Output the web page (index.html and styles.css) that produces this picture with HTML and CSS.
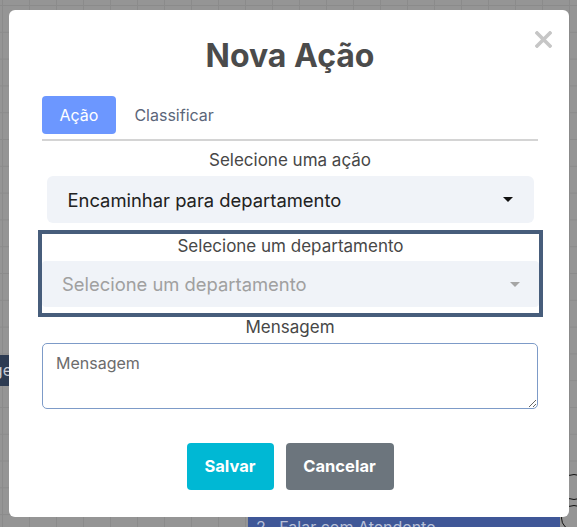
FILE: index.html
```html
<!DOCTYPE html>
<html lang="pt-BR">
<head>
<meta charset="utf-8">
<title>Nova Ação</title>
<link rel="stylesheet" href="styles.css">
</head>
<body>
<div class="canvas">
  <div class="bg-node bg-node-left">ge</div>
  <div class="bg-node bg-node-bottom">2&nbsp;&nbsp;&nbsp;Falar com Atendente.</div>
  <div class="bg-port bg-port-1"></div>
  <div class="bg-port bg-port-2"></div>
</div>
<div class="overlay">
  <div class="modal">
    <button class="close" aria-label="Fechar">
      <svg width="17" height="17" viewBox="0 0 17 17"><path d="M2 2L15 15M15 2L2 15" stroke="#c6c6c6" stroke-width="3.6" stroke-linecap="square"/></svg>
    </button>
    <h1 class="title">Nova Ação</h1>
    <div class="tabs">
      <button class="tab tab-active">Ação</button>
      <button class="tab">Classificar</button>
    </div>
    <div class="field">
      <label class="label">Selecione uma ação</label>
      <div class="select select-filled">
        <span>Encaminhar para departamento</span>
        <span class="caret"></span>
      </div>
    </div>
    <div class="field field-focus">
      <label class="label">Selecione um departamento</label>
      <div class="select select-empty">
        <span>Selecione um departamento</span>
        <span class="caret caret-muted"></span>
      </div>
    </div>
    <div class="field field-msg">
      <label class="label">Mensagem</label>
      <textarea class="textarea" placeholder="Mensagem"></textarea>
    </div>
    <div class="actions">
      <button class="btn btn-save">Salvar</button>
      <button class="btn btn-cancel">Cancelar</button>
    </div>
  </div>
</div>
</body>
</html>
```
FILE: styles.css
```css
* { box-sizing: border-box; }
html, body { margin: 0; padding: 0; }
body {
  width: 577px;
  height: 527px;
  overflow: hidden;
  font-family: Inter, Roboto, "Liberation Sans", sans-serif;
  background-color: #959595;
  background-image:
    linear-gradient(to bottom, #8b8b8b 0, #8b8b8b 1px, transparent 1px),
    linear-gradient(to right, #8b8b8b 0, #8b8b8b 1px, transparent 1px);
  background-size: 577px 26.8px, 27px 527px;
  background-position: 0 5px, 2px 0;
}
.canvas { position: relative; width: 577px; height: 527px; }
.bg-node {
  position: absolute;
  color: #c8ccd6;
  font-size: 16px;
  line-height: 30px;
  white-space: nowrap;
  overflow: hidden;
}
.bg-node-left {
  left: 0; top: 355px; width: 12px; height: 31px;
  background: #2d3b52;
  direction: rtl;
  text-align: left;
}
.bg-node-bottom {
  left: 248px; top: 512px; width: 312px; height: 15px;
  background: #3f5797;
  padding-left: 8px;
  color: #b8c0d8;
}
.bg-port {
  position: absolute;
  width: 26px; height: 26px;
  border: 1.5px solid #111;
  border-radius: 50%;
  background: #959595;
}
.bg-port-1 { left: 561px; top: 474px; }
.bg-port-2 { left: 561px; top: 505px; }

.overlay {
  position: fixed;
  inset: 0;
  padding: 10px 8px 10px 9px;
}
.modal {
  position: relative;
  width: 560px;
  height: 507px;
  background: #fff;
  border-radius: 6px;
  padding: 24px 31px 0 33px;
  display: flex;
  flex-direction: column;
}
.close {
  position: absolute;
  top: 21px;
  right: 17px;
  border: 0;
  background: none;
  padding: 0;
  line-height: 0;
  cursor: pointer;
}
.title {
  margin: 0;
  text-align: center;
  font-size: 32px;
  font-weight: 700;
  color: #4b4b4b;
  line-height: 44px;
}
.tabs {
  display: flex;
  gap: 1px;
  margin-top: 18px;
  padding-bottom: 5px;
  border-bottom: 2px solid #d4d4d4;
}
.tab {
  border: 0;
  background: none;
  font: 400 16px/22px Inter, Roboto, sans-serif;
  color: #5b6679;
  padding: 8px 17.5px;
  border-radius: 4px;
}
.tab-active {
  background: #6c97ff;
  color: #fff;
}
.field {
  display: flex;
  flex-direction: column;
  align-items: center;
}
.label {
  font-size: 17px;
  color: #474747;
  line-height: 20px;
  margin: 9px 0 6px;
}
.select {
  width: 100%;
  display: flex;
  align-items: center;
  justify-content: space-between;
  border-radius: 6px;
  background: #f0f3f8;
  font-size: 18.4px;
}
.select-filled {
  width: 487px;
  height: 47px;
  padding: 0 21px 0 21px;
  color: #212121;
}
.select-empty {
  height: 46px;
  padding: 0 19px 0 20px;
  color: #a0a0a0;
  border-radius: 4px;
}
.caret {
  width: 0; height: 0;
  border-left: 5px solid transparent;
  border-right: 5px solid transparent;
  border-top: 5px solid #111;
}
.caret-muted { border-top-color: #a5a5a5; }
.field-focus {
  margin: 7px -5px 0 -4px;
  border: 4px solid #475d7b;
  padding: 0 0 6px;
}
.field-focus .label { margin: 2px 0 5px; }
.field-msg .label { margin: 0 0 6px; }
.textarea {
  width: 100%;
  height: 66px;
  border: 1px solid #7d9bc8;
  border-radius: 5px;
  padding: 8px 13px;
  font: 400 16px/22px Inter, Roboto, sans-serif;
  color: #333;
  resize: vertical;
}
.textarea::placeholder { color: #6c6c6c; }
.actions {
  display: flex;
  justify-content: center;
  gap: 12px;
  margin-top: 34px;
}
.btn {
  border: 0;
  border-radius: 4px;
  color: #fff;
  font: 700 16.5px/1 Inter, Roboto, sans-serif;
  height: 47px;
  padding: 0;
}
.btn-save { background: #00b8d4; width: 87px; }
.btn-cancel { background: #6c757d; width: 108px; }
```
